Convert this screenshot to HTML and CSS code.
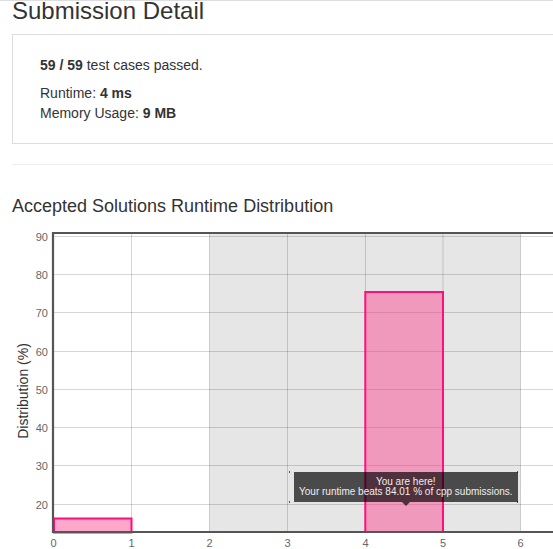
FILE: index.html
```html
<!DOCTYPE html>
<html>
<head>
<meta charset="utf-8">
<link rel="stylesheet" href="styles.css">
</head>
<body>
<div class="page">
  <h1 class="title">Submission Detail</h1>
  <div class="panel">
    <div class="passed"><b>59 / 59</b> test cases passed.</div>
    <div class="stat">Runtime: <b>4 ms</b></div>
    <div class="stat">Memory Usage: <b>9 MB</b></div>
  </div>
  <hr class="divider">
  <h3 class="subtitle">Accepted Solutions Runtime Distribution</h3>
</div>
<div class="chart">
  <svg class="chart-svg" width="553" height="333" viewBox="0 216 553 333">
    <rect x="209.5" y="234" width="311" height="297" fill="#e6e6e6"/>
    <g stroke="#000" stroke-opacity="0.16" stroke-width="1">
      <line x1="54" y1="236.5" x2="553" y2="236.5"/>
      <line x1="54" y1="274.5" x2="553" y2="274.5"/>
      <line x1="54" y1="312.5" x2="553" y2="312.5"/>
      <line x1="54" y1="351.5" x2="553" y2="351.5"/>
      <line x1="54" y1="389.5" x2="553" y2="389.5"/>
      <line x1="54" y1="427.5" x2="553" y2="427.5"/>
      <line x1="54" y1="465.5" x2="553" y2="465.5"/>
      <line x1="54" y1="504.5" x2="553" y2="504.5"/>
      <line x1="131.5" y1="234" x2="131.5" y2="531"/>
      <line x1="209.5" y1="234" x2="209.5" y2="531"/>
      <line x1="287.5" y1="234" x2="287.5" y2="531"/>
      <line x1="365.5" y1="234" x2="365.5" y2="531"/>
      <line x1="443" y1="234" x2="443" y2="531"/>
      <line x1="520.5" y1="234" x2="520.5" y2="531"/>
    </g>
    <g fill="rgb(255,60,140)" fill-opacity="0.45" stroke="#ff0f7b" stroke-width="2">
      <rect x="54" y="518.5" width="77.5" height="14"/>
      <rect x="365.3" y="292" width="77.7" height="240"/>
    </g>
    <g stroke="#555" stroke-width="2.2">
      <line x1="53" y1="232" x2="53" y2="533"/>
      <line x1="52" y1="233" x2="553" y2="233"/>
      <line x1="52" y1="532" x2="553" y2="532"/>
    </g>
    <g class="tick" text-anchor="end">
      <text x="48" y="240.5">90</text>
      <text x="48" y="278.5">80</text>
      <text x="48" y="316.5">70</text>
      <text x="48" y="355.5">60</text>
      <text x="48" y="393.5">50</text>
      <text x="48" y="431.5">40</text>
      <text x="48" y="469.5">30</text>
      <text x="48" y="508.5">20</text>
    </g>
    <g class="tick" text-anchor="middle">
      <text x="53.5" y="547">0</text>
      <text x="131.5" y="547">1</text>
      <text x="209.5" y="547">2</text>
      <text x="287.5" y="547">3</text>
      <text x="365.5" y="547">4</text>
      <text x="443" y="547">5</text>
      <text x="520.5" y="547">6</text>
    </g>
    <text class="axis-title" transform="translate(28,391) rotate(-90)" text-anchor="middle">Distribution (%)</text>
    <g fill="#555">
      <rect x="289" y="471" width="1" height="2"/>
      <rect x="289" y="501" width="1" height="2"/>
      <rect x="517" y="471" width="1" height="2"/>
      <rect x="517" y="501" width="1" height="2"/>
    </g>
  </svg>
  <div class="tooltip">You are here!<br>Your runtime beats 84.01 % of cpp submissions.</div>
</div>
</body>
</html>
```
FILE: styles.css
```css
html, body {
  margin: 0;
  padding: 0;
  overflow: hidden;
}
body {
  font-family: "Liberation Sans", Arial, sans-serif;
  color: #333;
  border-top: 1px solid #ddd;
  width: 553px;
  height: 548px;
}
.page {
  padding-left: 12px;
  width: 640px;
}
.title {
  font-size: 24px;
  font-weight: 400;
  line-height: 20px;
  margin: 0 0 13px;
}
.panel {
  border: 1px solid #ddd;
  padding: 20px 27px;
  font-size: 14px;
  line-height: 20px;
}
.passed {
  margin-bottom: 8px;
}
.divider {
  border: 0;
  border-top: 1px solid #eee;
  margin: 20px 0 31px;
}
.subtitle {
  font-size: 18px;
  font-weight: 400;
  line-height: 20px;
  margin: 0;
}
.chart {
  position: relative;
  width: 553px;
  height: 333px;
}
.chart-svg {
  display: block;
}
.tick {
  font-family: "Liberation Sans", Arial, sans-serif;
  font-size: 11px;
  fill: #666;
}
.axis-title {
  font-family: "Liberation Sans", Arial, sans-serif;
  font-size: 14px;
  fill: #333;
}
.tooltip {
  position: absolute;
  left: 294px;
  top: 256px;
  padding: 5px;
  background: rgba(0, 0, 0, 0.68);
  color: #eee;
  font-size: 10px;
  line-height: 10px;
  text-align: center;
  white-space: nowrap;
}
.tooltip::after {
  content: "";
  position: absolute;
  left: 50%;
  bottom: -4px;
  margin-left: -4px;
  border-left: 4px solid transparent;
  border-right: 4px solid transparent;
  border-top: 4px solid rgba(0, 0, 0, 0.68);
}
```
